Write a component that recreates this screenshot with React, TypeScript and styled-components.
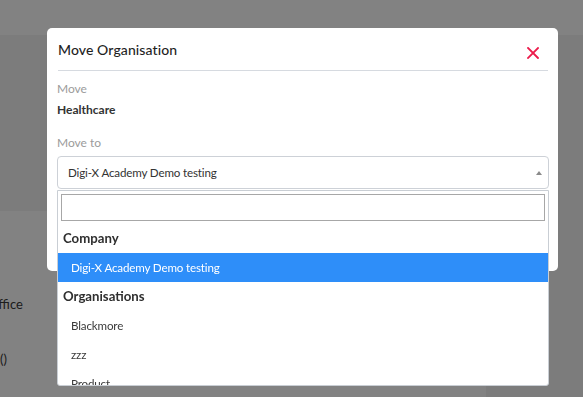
import React from 'react';
import styled, { createGlobalStyle } from 'styled-components';

const Global = createGlobalStyle`
  html, body { margin: 0; padding: 0; }
  body {
    font-family: Lato, "Noto Sans", "DejaVu Sans", sans-serif;
    background: #f4f4f4;
    width: 583px;
    height: 397px;
    overflow: hidden;
  }
  * { box-sizing: border-box; }
`;

const Page = styled.div`
  display: flex;
  flex-direction: column;
  width: 583px;
  height: 397px;
  overflow: hidden;
`;

const TopBar = styled.div`
  height: 35px;
  flex: none;
  background: #ffffff;
`;

const Body = styled.div`
  flex: 1;
  display: flex;
  padding-top: 176px;
`;

const Card = styled.div`
  width: 526px;
  margin-left: -40px;
  background: #ffffff;
  display: flex;
  flex-direction: column;
  gap: 38px;
  padding: 85px 0 0 28px;
`;

const CardLine = styled.div<{ $indent?: number }>`
  font-size: 13px;
  line-height: 17px;
  color: #3a3a3a;
  margin-left: ${p => p.$indent ?? 0}px;
`;

const Overlay = styled.div`
  position: fixed;
  inset: 0;
  background: rgba(0, 0, 0, 0.49);
  display: flex;
  align-items: flex-start;
  padding: 28px 0 0 47px;
`;

const Modal = styled.div`
  width: 511px;
  height: 243px;
  background: #ffffff;
  border-radius: 5px;
  padding: 0 9px 0 10px;
  display: flex;
  flex-direction: column;
`;

const Header = styled.div`
  margin: 0 1px;
  height: 43px;
  border-bottom: 1px solid #d6dae0;
  display: flex;
  align-items: center;
  justify-content: space-between;
`;

const Title = styled.h2`
  margin: 0;
  font-size: 14px;
  font-weight: 500;
  color: #1f1f1f;
  letter-spacing: 0.1px;
`;

const CloseButton = styled.button`
  border: 0;
  background: none;
  padding: 8px 0 0 0;
  margin-right: 9px;
  display: flex;
  cursor: pointer;
`;

const Content = styled.div`
  display: flex;
  flex-direction: column;
  padding-top: 10px;
`;

const Label = styled.div<{ $gap?: number }>`
  font-size: 12px;
  line-height: 16px;
  color: #9b9b9b;
  margin-top: ${p => p.$gap ?? 0}px;
`;

const Value = styled.div`
  font-size: 12px;
  line-height: 16px;
  font-weight: 700;
  color: #333333;
  margin-top: 5px;
`;

const SelectWrap = styled.div`
  position: relative;
  margin-top: 5px;
`;

const SelectBox = styled.div`
  height: 33px;
  border: 1px solid #cdd1d7;
  border-radius: 4px;
  display: flex;
  align-items: center;
  justify-content: space-between;
  padding: 0 6px 0 10px;
  font-size: 11.6px;
  letter-spacing: -0.15px;
  color: #333333;
`;

const Caret = styled.span`
  width: 0;
  height: 0;
  border-left: 3.5px solid transparent;
  border-right: 3.5px solid transparent;
  border-bottom: 4px solid #8a8a8a;
`;

const Dropdown = styled.div`
  position: absolute;
  top: calc(100% + 1px);
  left: 0;
  right: 0;
  height: 196px;
  background: #ffffff;
  border: 1px solid #c9ced4;
  border-radius: 0 0 3px 3px;
  display: flex;
  flex-direction: column;
`;

const SearchArea = styled.div`
  padding: 3px;
  flex: none;
`;

const SearchInput = styled.input`
  display: block;
  width: 100%;
  height: 27px;
  margin: 0;
  border: 1px solid #a7a7a7;
  border-radius: 0;
  outline: none;
  font: inherit;
`;

const List = styled.div`
  flex: 1;
  overflow: hidden;
`;

const GroupHeader = styled.div`
  height: 29px;
  line-height: 29px;
  padding-left: 5px;
  font-size: 13.2px;
  font-weight: 700;
  color: #2f2f2f;
`;

const Option = styled.div<{ $selected?: boolean }>`
  height: 29px;
  line-height: 29px;
  padding-left: 13px;
  font-size: 11.6px;
  letter-spacing: -0.15px;
  color: ${p => (p.$selected ? '#ffffff' : '#3a3a3a')};
  background: ${p => (p.$selected ? '#2e8ef9' : 'transparent')};
`;

const CloseIcon = () => (
  <svg width="12" height="12" viewBox="0 0 12 12">
    <path d="M1 1 L11 11 M11 1 L1 11" stroke="#ec1b4b" strokeWidth="1.8" strokeLinecap="square" fill="none" />
  </svg>
);

export default function App() {
  return (
    <>
      <Global />
      <Page>
        <TopBar />
        <Body>
          <Card>
            <CardLine>Office</CardLine>
            <CardLine $indent={12}>()</CardLine>
          </Card>
        </Body>
      </Page>
      <Overlay>
        <Modal>
          <Header>
            <Title>Move Organisation</Title>
            <CloseButton aria-label="Close">
              <CloseIcon />
            </CloseButton>
          </Header>
          <Content>
            <Label>Move</Label>
            <Value>Healthcare</Value>
            <Label $gap={17}>Move to</Label>
            <SelectWrap>
              <SelectBox>
                <span>Digi-X Academy Demo testing</span>
                <Caret />
              </SelectBox>
              <Dropdown>
                <SearchArea>
                  <SearchInput type="text" />
                </SearchArea>
                <List>
                  <GroupHeader>Company</GroupHeader>
                  <Option $selected>Digi-X Academy Demo testing</Option>
                  <GroupHeader>Organisations</GroupHeader>
                  <Option>Blackmore</Option>
                  <Option>zzz</Option>
                  <Option>Product</Option>
                </List>
              </Dropdown>
            </SelectWrap>
          </Content>
        </Modal>
      </Overlay>
    </>
  );
}
